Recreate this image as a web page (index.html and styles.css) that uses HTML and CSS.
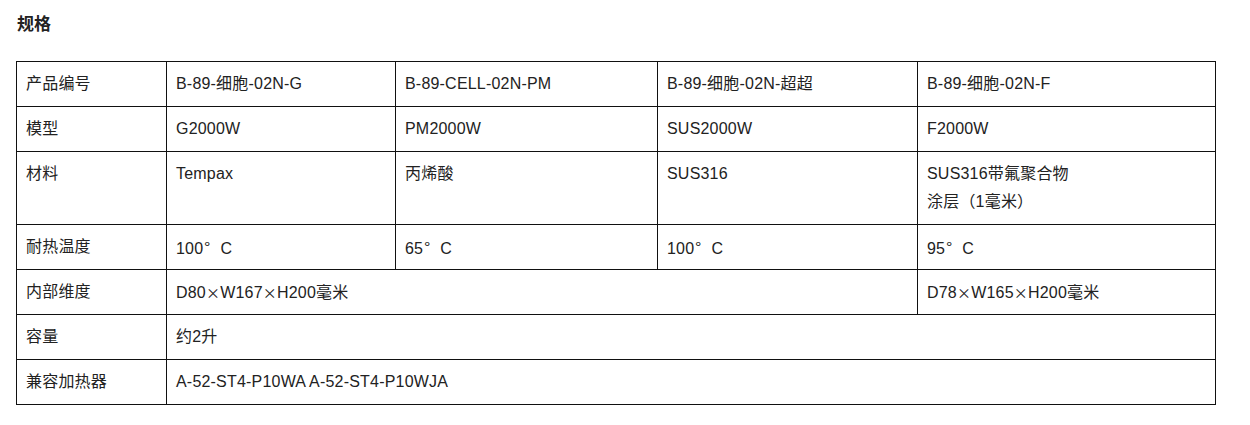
FILE: index.html
```html
<!DOCTYPE html>
<html lang="zh">
<head>
<meta charset="utf-8">
<link rel="stylesheet" href="styles.css">
</head>
<body>
<h2 class="title">规格</h2>
<table class="spec">
<colgroup>
<col class="c1"><col class="c2"><col class="c3"><col class="c4"><col class="c5">
</colgroup>
<tbody>
<tr><td><div class="ln">产品编号</div></td><td><div class="ln">B-89-细胞-02N-G</div></td><td><div class="ln">B-89-CELL-02N-PM</div></td><td><div class="ln">B-89-细胞-02N-超超</div></td><td><div class="ln">B-89-细胞-02N-F</div></td></tr>
<tr><td><div class="ln">模型</div></td><td><div class="ln">G2000W</div></td><td><div class="ln">PM2000W</div></td><td><div class="ln">SUS2000W</div></td><td><div class="ln">F2000W</div></td></tr>
<tr><td><div class="ln">材料</div></td><td><div class="ln">Tempax</div></td><td><div class="ln">丙烯酸</div></td><td><div class="ln">SUS316</div></td><td><div class="ln">SUS316带氟聚合物</div><div class="ln">涂层（1毫米）</div></td></tr>
<tr><td><div class="ln">耐热温度</div></td><td><div class="ln">100<span class="deg">°</span>C</div></td><td><div class="ln">65<span class="deg">°</span>C</div></td><td><div class="ln">100<span class="deg">°</span>C</div></td><td><div class="ln">95<span class="deg">°</span>C</div></td></tr>
<tr><td><div class="ln">内部维度</div></td><td colspan="3"><div class="ln">D80<span class="cjk">×</span>W167<span class="cjk">×</span>H200毫米</div></td><td><div class="ln">D78<span class="cjk">×</span>W165<span class="cjk">×</span>H200毫米</div></td></tr>
<tr><td><div class="ln">容量</div></td><td colspan="4"><div class="ln">约2升</div></td></tr>
<tr><td><div class="ln">兼容加热器</div></td><td colspan="4"><div class="ln">A-52-ST4-P10WA A-52-ST4-P10WJA</div></td></tr>
</tbody>
</table>
</body>
</html>
```
FILE: styles.css
```css
body {
  margin: 0;
  padding: 12px 16px;
  background: #fff;
  color: #222;
  font-family: "Liberation Sans", "Noto Sans CJK SC", sans-serif;
}
.title {
  margin: 0 0 27px 1px;
  font-size: 17px;
  font-weight: bold;
  line-height: 22px;
  font-family: "Noto Sans CJK SC", sans-serif;
}
.spec {
  border-collapse: collapse;
  width: 1199px;
  table-layout: fixed;
  font-size: 16px;
  letter-spacing: 0.2px;
}
.spec .c1 { width: 150px; }
.spec .c2 { width: 229px; }
.spec .c3 { width: 262px; }
.spec .c4 { width: 260px; }
.spec .c5 { width: 298px; }
.spec td {
  border: 1px solid #111;
  padding: 8px 8px 8px 9px;
  vertical-align: top;
  text-align: left;
}
.ln {
  height: 28px;
  line-height: 28px;
  white-space: nowrap;
}
.cjk {
  font-family: "Noto Sans CJK SC", sans-serif;
  font-size: 14px;
}
.deg {
  font-family: "Noto Sans CJK SC", sans-serif;
  padding: 0 10px 0 1px;
}
```
